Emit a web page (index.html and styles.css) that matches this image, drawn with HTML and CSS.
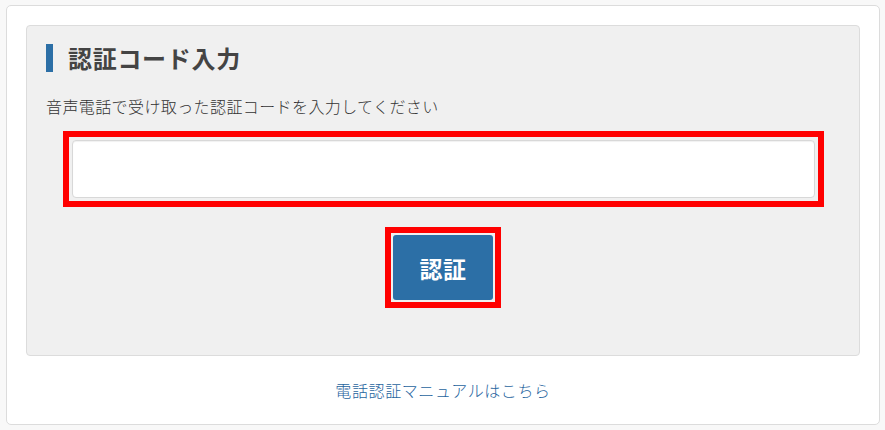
FILE: index.html
```html
<!DOCTYPE html>
<html lang="ja">
<head>
<meta charset="utf-8">
<title>認証コード入力</title>
<link rel="stylesheet" href="styles.css">
</head>
<body>
<div class="card">
  <section class="panel">
    <h2 class="panel-title">認証コード入力</h2>
    <p class="panel-desc">音声電話で受け取った認証コードを入力してください</p>
    <div class="frame frame-input">
      <input class="code-input" type="text" aria-label="認証コード">
    </div>
    <div class="frame frame-btn">
      <button class="btn" type="button">認証</button>
    </div>
  </section>
  <div class="manual">
    <a class="manual-link" href="#">電話認証マニュアルはこちら</a>
  </div>
</div>
</body>
</html>
```

FILE: styles.css
```css
* { box-sizing: border-box; }
html, body { margin: 0; }
body {
  background: #f8f8f8;
  padding: 5px 6px 6px 6px;
  font-family: "Noto Sans CJK JP", "Noto Sans", sans-serif;
  color: #444;
}
.card {
  width: 874px;
  height: 420px;
  background: #fff;
  border: 1px solid #dcdcdc;
  border-radius: 5px;
  padding: 19px 19px 0 19px;
}
.panel {
  background: #f0f0f0;
  border: 1px solid #dcdcdc;
  border-radius: 4px;
  height: 331px;
  padding: 18px 19px 0 19px;
}
.panel-title {
  margin: 0;
  height: 28px;
  line-height: 27px;
  border-left: 7px solid #2c6fa6;
  padding-left: 15px;
  font-size: 24px;
  font-weight: 700;
  letter-spacing: 0.7px;
  color: #444;
}
.panel-desc {
  margin: 22px 0 0 0;
  font-size: 16px;
  line-height: 24px;
  font-weight: 300;
  letter-spacing: 0.4px;
  color: #333;
}
.frame {
  border: 6px solid #ff0000;
  margin: 0 auto;
}
.frame-input {
  width: 761px;
  margin-top: 13px;
  padding: 3px;
}
.code-input {
  display: block;
  width: 743px;
  height: 58px;
  border: 1px solid #d8d8d8;
  border-radius: 4px;
  background: #fff;
  box-shadow: inset 0 1px 1px rgba(0,0,0,0.06);
  outline: none;
  font-size: 16px;
  padding: 0 12px;
}
.frame-btn {
  width: 116px;
  margin-top: 20px;
  padding: 2px;
}
.btn {
  display: block;
  width: 100px;
  height: 65px;
  background: #2c6fa6;
  border: none;
  border-radius: 3px;
  color: #fff;
  font-family: "Noto Sans CJK JP", sans-serif;
  font-size: 23px;
  font-weight: 700;
  letter-spacing: 0.5px;
  cursor: pointer;
}
.manual {
  text-align: center;
  padding-top: 22px;
}
.manual-link {
  font-size: 16px;
  line-height: 24px;
  font-weight: 300;
  letter-spacing: 0.6px;
  color: #1f649e;
  text-decoration: none;
}
```
